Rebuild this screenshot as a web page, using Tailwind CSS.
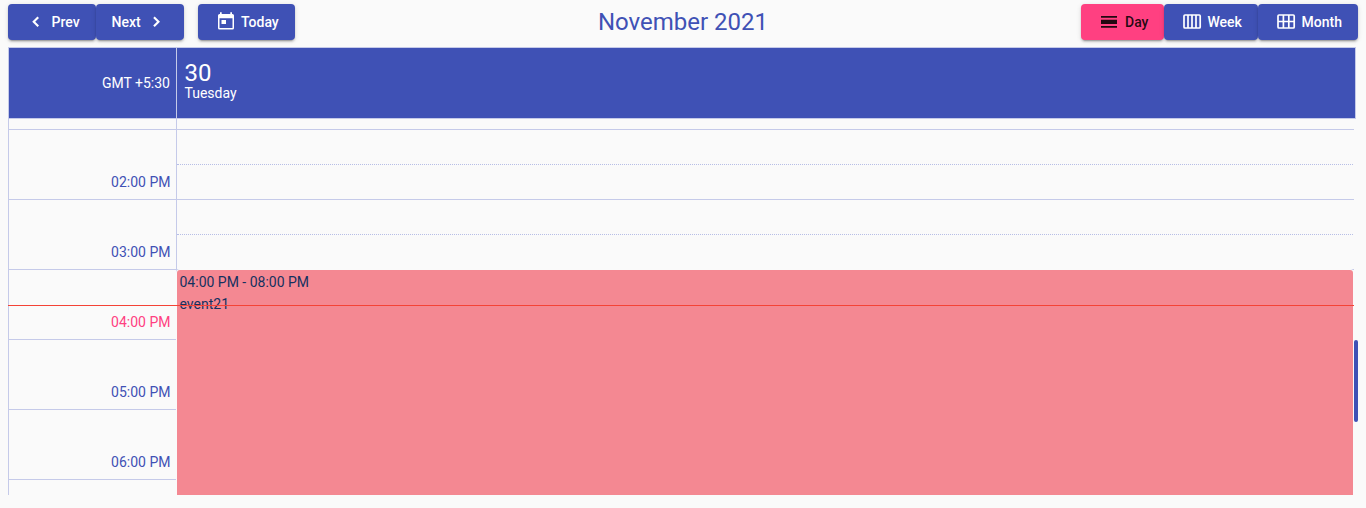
<!DOCTYPE html>
<html lang="en">
<head>
<meta charset="utf-8">
<title>Calendar</title>
<script src="https://cdn.jsdelivr.net/npm/@tailwindcss/browser@4"></script>
</head>
<body class="h-[508px] overflow-hidden bg-[#fafafa] px-2 pt-1 font-[Roboto,sans-serif] text-sm text-[#3f51b5]">
<header class="grid h-[43px] grid-cols-3 items-start">
  <div class="flex text-white font-medium">
    <button class="flex h-9 w-[88px] items-center rounded bg-[#3f51b5] pl-4 shadow-[0_3px_1px_-2px_rgba(0,0,0,.2),0_2px_2px_rgba(0,0,0,.14),0_1px_5px_rgba(0,0,0,.12)]">
      <svg class="size-6 fill-current" viewBox="0 0 24 24"><path d="M15 8 13.5 6.5 8.2 11.8l5.3 5.2L15 15.6l-3.8-3.8z"/></svg><span class="ml-[3.5px]">Prev</span>
    </button>
    <button class="flex h-9 w-[88px] items-center rounded bg-[#3f51b5] pl-[15.5px] shadow-[0_3px_1px_-2px_rgba(0,0,0,.2),0_2px_2px_rgba(0,0,0,.14),0_1px_5px_rgba(0,0,0,.12)]">
      <span>Next</span><svg class="ml-[3px] size-6 fill-current" viewBox="0 0 24 24"><path d="M9.2 8l1.5-1.5 5.3 5.3-5.3 5.2-1.5-1.4 3.8-3.8z"/></svg>
    </button>
    <button class="ml-[14px] flex h-9 w-[97px] items-center rounded bg-[#3f51b5] pl-4 shadow-[0_3px_1px_-2px_rgba(0,0,0,.2),0_2px_2px_rgba(0,0,0,.14),0_1px_5px_rgba(0,0,0,.12)]">
      <svg class="size-6 fill-current" viewBox="0 0 24 24"><path fill-rule="evenodd" d="M5.5 4H6V2.2h1.7V4h8.6V2.2H18V4h.5A1.5 1.5 0 0 1 20 5.500v12.600a1.500 1.500 0 0 1-1.500 1.500H5.500A1.500 1.500 0 0 1 4 18.100V5.500A1.500 1.500 0 0 1 5.500 4zM5.500 8.200v9.900h13V8.200zM7.500 10H12v4H7.500z"/></svg><span class="ml-[3px]">Today</span>
    </button>
  </div>
  <h1 class="text-center text-2xl leading-9">November 2021</h1>
  <div class="flex justify-end text-white font-medium">
    <button class="flex h-9 w-[83px] items-center rounded bg-[#ff4081] pl-4 text-black/87 shadow-[0_3px_1px_-2px_rgba(0,0,0,.2),0_2px_2px_rgba(0,0,0,.14),0_1px_5px_rgba(0,0,0,.12)]">
      <svg class="size-6 fill-current" viewBox="0 0 24 24"><path d="M4 6h16v1.700H4zM4 9.800h16v4.200H4zM4 16h16v1.700H4z"/></svg><span class="ml-1">Day</span>
    </button>
    <button class="flex h-9 w-[94px] items-center rounded bg-[#3f51b5] pl-4 shadow-[0_3px_1px_-2px_rgba(0,0,0,.2),0_2px_2px_rgba(0,0,0,.14),0_1px_5px_rgba(0,0,0,.12)]">
      <svg class="size-6 fill-none stroke-current stroke-[1.7]" viewBox="0 0 24 24"><rect x="4" y="5" width="16.200" height="13" rx="1"/><path d="M8 5v13M12 5v13M16 5v13"/></svg><span class="ml-[3.5px]">Week</span>
    </button>
    <button class="flex h-9 w-[100px] items-center rounded bg-[#3f51b5] pl-4 shadow-[0_3px_1px_-2px_rgba(0,0,0,.2),0_2px_2px_rgba(0,0,0,.14),0_1px_5px_rgba(0,0,0,.12)]">
      <svg class="size-6 fill-none stroke-current stroke-[1.7]" viewBox="0 0 24 24"><rect x="4" y="5" width="16.200" height="13" rx="1"/><path d="M9.400 5v13M14.800 5v13M4 11.500h16"/></svg><span class="ml-[3.5px]">Month</span>
    </button>
  </div>
</header>
<main>
  <div class="flex h-[72px] w-[1348px] border border-[#c5cae9] bg-[#3f51b5] text-white">
    <div class="flex w-[168px] items-center justify-end border-r border-[#c5cae9] pr-1.5">GMT +5:30</div>
    <div class="flex flex-col pt-[11px] pl-[7.5px]">
      <div class="text-2xl leading-7">30</div>
      <div class="leading-3">Tuesday</div>
    </div>
  </div>
  <div class="relative flex h-[376px]">
    <div class="flex w-[169px] flex-col overflow-hidden border-x border-[#c5cae9] text-right">
      <div class="h-[11px] shrink-0 border-b border-[#c5cae9]"></div>
      <div class="h-[70px] shrink-0 border-b border-[#c5cae9] pt-[42px] pr-[5.5px]">02:00 PM</div>
      <div class="h-[70px] shrink-0 border-b border-[#c5cae9] pt-[42px] pr-[5.5px]">03:00 PM</div>
      <div class="h-[70px] shrink-0 border-b border-[#c5cae9] pt-[42px] pr-[5.5px] text-[#ff4081]">04:00 PM</div>
      <div class="h-[70px] shrink-0 border-b border-[#c5cae9] pt-[42px] pr-[5.5px]">05:00 PM</div>
      <div class="h-[70px] shrink-0 border-b border-[#c5cae9] pt-[42px] pr-[5.5px]">06:00 PM</div>
    </div>
    <div class="flex w-[1177px] flex-col overflow-hidden">
      <div class="h-[11px] shrink-0 border-b border-[#c5cae9]"></div>
      <div class="mr-px h-[35px] shrink-0 border-b border-dotted border-[#b7bee6]"></div>
      <div class="h-[35px] shrink-0 border-b border-[#c5cae9]"></div>
      <div class="mr-px h-[35px] shrink-0 border-b border-dotted border-[#b7bee6]"></div>
      <div class="h-[35px] shrink-0 border-b border-[#c5cae9]"></div>
    </div>
    <div class="absolute top-[151px] left-[169px] h-[225px] w-[1176px] rounded-t-[3px] bg-[#f48892] pt-px pl-[2.5px] leading-[22px] text-[#14315f] shadow-[0_0_0_1px_#fafafa]">
      <div>04:00 PM - 08:00 PM</div>
      <div>event21</div>
    </div>
    <div class="absolute top-[186px] left-0 h-px w-[1346px] bg-[#f44336]"></div>
    <div class="absolute top-[221px] left-[1346px] h-[82px] w-1 rounded-sm bg-[#3f51b5]"></div>
  </div>
</main>
</body>
</html>
